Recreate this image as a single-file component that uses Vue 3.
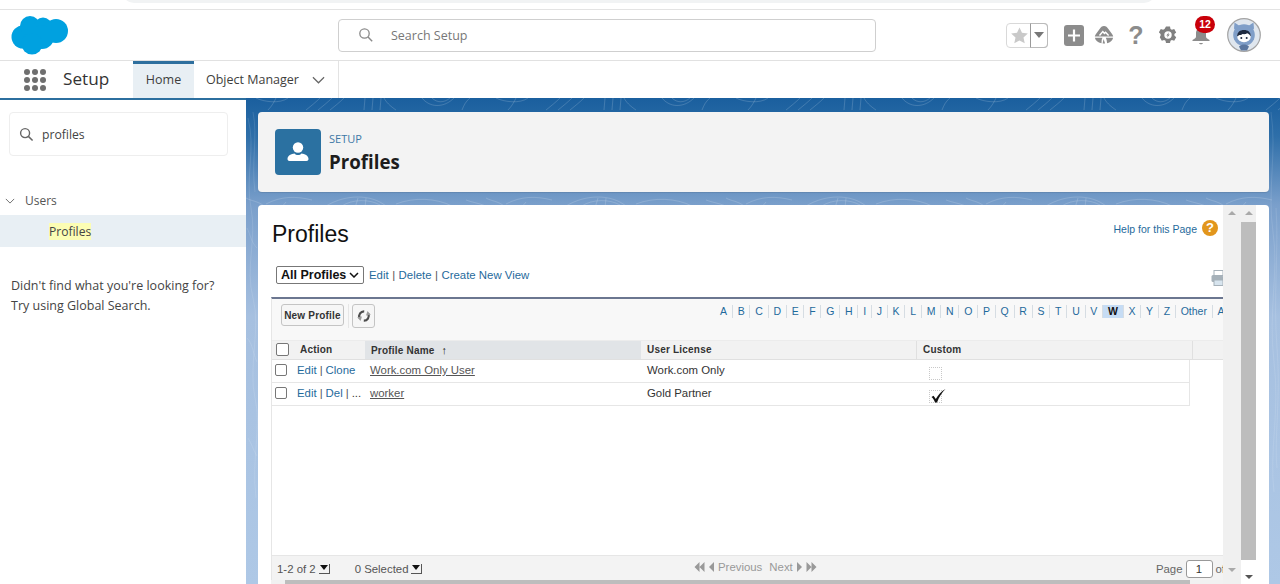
<script setup>
const letters = ['A','B','C','D','E','F','G','H','I','J','K','L','M','N','O','P','Q','R','S','T','U','V','W','X','Y','Z','Other','All']
const rows = [
  { id: 1, actions: ['Edit', 'Clone'], name: 'Work.com Only User', license: 'Work.com Only', custom: false },
  { id: 2, actions: ['Edit', 'Del'], more: true, name: 'worker', license: 'Gold Partner', custom: true }
]
const dots = Array.from({ length: 9 }, (_, i) => i)
</script>

<template>
  <div class="page">
    <div class="chrome"><div class="chrome-pill"></div></div>

    <header class="topbar">
      <div class="logo-wrap">
        <svg class="logo" viewBox="0 0 58 40" width="58" height="40">
          <g fill="#00a1e0">
            <circle cx="12" cy="22" r="11.500" />
            <circle cx="19" cy="11" r="10" />
            <circle cx="32" cy="11.500" r="9" />
            <circle cx="45" cy="16" r="12" />
            <circle cx="31" cy="22" r="12" />
            <circle cx="21" cy="29" r="10.500" />
          </g>
        </svg>
      </div>
      <div class="global-search">
        <svg class="search-ic" viewBox="0 0 16 16" width="16" height="16"><circle cx="6.500" cy="6.500" r="4.700" fill="none" stroke="#8a8a8a" stroke-width="1.300"/><path d="M10 10l4.200 4.200" stroke="#8a8a8a" stroke-width="1.400"/></svg>
        <span>Search Setup</span>
      </div>
      <div class="spacer"></div>
      <div class="tools">
        <div class="fav">
          <div class="fav-star">
            <svg viewBox="0 0 20 20" width="19" height="19"><path d="M10 1.500l2.600 5.700 6.200.7-4.600 4.200 1.300 6.100L10 15.200l-5.500 3 1.300-6.100L1.200 7.900l6.200-.7z" fill="#c9c9c9"/></svg>
          </div>
          <div class="fav-caret"><i></i></div>
        </div>
        <svg class="t-plus" viewBox="0 0 20 21" width="20" height="21"><rect width="20" height="21" rx="3" fill="#8c8c8c"/><path d="M10 4.500v12M4 10.500h12" stroke="#fff" stroke-width="2.200"/></svg>
        <svg class="t-trail" viewBox="0 0 20 20" width="20" height="20">
          <path d="M10 1c2 0 3.200 1.300 4.200 2.800l4 5.400c.6.800.9 1.500 1 2.300H.8c.1-.8.4-1.500 1-2.300l4-5.400C6.800 2.300 8 1 10 1z" fill="#8c8c8c"/>
          <path d="M5.500 10.500l3.300-4 1.600 2 1.200-1.200 3 3.200" fill="none" stroke="#fff" stroke-width="1.400"/>
          <path d="M.9 12.800h7.600l-.8 2-.2 3.500C3.800 17.700 1.500 15.700.9 12.800zM11.800 12.800h7.300c-.6 2.900-2.800 4.900-6 5.500l-.5-3.500zM9.600 14l1.500 4.500H8.600z" fill="#8c8c8c"/>
        </svg>
        <span class="t-help">?</span>
        <svg class="t-gear" viewBox="0 0 18 18" width="18" height="18"><path d="M7 .5h4l.5 2.400 1.400.8 2.300-.8 2 3.500-1.800 1.600v1.600l1.800 1.600-2 3.500-2.300-.8-1.400.8-.5 2.400H7l-.5-2.400-1.400-.8-2.300.8-2-3.500L1.600 9.600V8L-.2 6.400l2-3.500 2.300.8 1.400-.8z" fill="#808080"/><circle cx="9" cy="9" r="3.700" fill="#fff"/><path d="M10 6.200L7.300 9.500h1.500l-.8 2.300 2.700-3.300H9.200z" fill="#808080"/></svg>
        <div class="t-bell">
          <svg viewBox="0 0 20 20" width="20" height="20"><path d="M10 2c3.300 0 5 2.400 5 5.200v3.300c0 1.300 1 2 3.500 3.500v1H1.500v-1C4 12.500 5 11.800 5 10.500V7.200C5 4.400 6.700 2 10 2z" fill="#8c8c8c"/><path d="M8 17h4c-.3.900-1 1.300-2 1.300s-1.700-.4-2-1.300z" fill="#8c8c8c"/></svg>
          <span class="badge">12</span>
        </div>
        <svg class="t-avatar" viewBox="0 0 34 34" width="34" height="34">
          <defs><clipPath id="av"><circle cx="17" cy="17" r="16"/></clipPath></defs>
          <circle cx="17" cy="17" r="16.300" fill="#dfe6ee" stroke="#a3a3a3" stroke-width="1.200"/>
          <g clip-path="url(#av)">
            <path d="M7.500 4.500l4.500 3h10l4.500-3 .5 6-3 4H10l-3-4z" fill="#7f9ec8"/>
            <circle cx="17" cy="17" r="10.800" fill="#7f9ec8"/>
            <path d="M12 28.500c1.500-1.500 3.500-2 5-2s3.500.5 5 2l-2 4h-6z" fill="#5a769f"/>
            <ellipse cx="17" cy="18.500" rx="6.800" ry="5.800" fill="#fff"/>
            <path d="M10 18.500c.3-4.500 3-6.500 7-6.500s6.700 2 7 6.500c-1.200-1.500-2.200-2.800-3.800-3.300-1.200.9-3 1.300-4.700.9-.8.9-1.500 1-2.300 1-1 0-2 .7-3.200 1.400z" fill="#1e2a40"/>
            <circle cx="14.300" cy="20" r="1" fill="#1e2a40"/><circle cx="19.700" cy="20" r="1" fill="#1e2a40"/>
          </g>
        </svg>
      </div>
    </header>

    <nav class="navbar">
      <div class="waffle">
        <i v-for="d in dots" :key="d"></i>
      </div>
      <span class="app-name">Setup</span>
      <a class="tab tab-active">Home</a>
      <a class="tab tab-om">Object Manager
        <svg viewBox="0 0 14 8" width="13" height="8"><path d="M1 1l6 6 6-6" fill="none" stroke="#666" stroke-width="1.300"/></svg>
      </a>
    </nav>

    <div class="body">
      <aside class="sidebar">
        <div class="side-search">
          <svg viewBox="0 0 16 16" width="15" height="15"><circle cx="6.500" cy="6.500" r="4.800" fill="none" stroke="#666" stroke-width="1.500"/><path d="M10 10l4.500 4.500" stroke="#666" stroke-width="1.600"/></svg>
          <span>profiles</span>
        </div>
        <div class="tree-head">
          <svg viewBox="0 0 12 7" width="10" height="6"><path d="M1 1l5 5 5-5" fill="none" stroke="#666" stroke-width="1.100"/></svg>
          <span>Users</span>
        </div>
        <div class="tree-item"><mark>Profiles</mark></div>
        <p class="hint">Didn't find what you're looking for?<br>Try using Global Search.</p>
      </aside>

      <main class="main">
        <svg class="contours" width="1034" height="484">
          <defs>
            <pattern id="topo" width="240" height="110" patternUnits="userSpaceOnUse">
              <g fill="none" stroke="#fff" stroke-opacity=".16" stroke-width="1">
                <path d="M10 0c8 4 24 6 32 0M22 12c4-4 6-8 8-12M60 12c5-4 10-8 14-12M72 12c5-4 10-8 14-12M84 12c5-4 10-8 14-12"/>
                <path d="M118 12l1-12M126 12l1-12M134 12l1-12M150 12c-6-4-10-8-12-12M176 0c8 10 22 10 32 0M186 0c5 5 12 5 18 0M216 12c2-5 4-9 8-12"/>
                <path d="M20 106c15-8 30-8 46-4M80 108c20-12 45-12 60 0M96 108c10-7 28-7 38-1M150 106c18-7 40-6 56 2M0 100c5 3 12 3 18 8"/>
                <path d="M40 104l-5 6M112 100l-3 10M120 100l-1 10M220 102c5 2 12 3 20 6"/>
              </g>
            </pattern>
          </defs>
          <rect x="0" y="0" width="1034" height="110" fill="url(#topo)"/>
          <g fill="none" stroke="#fff" stroke-opacity=".11" stroke-width="1">
            <path d="M2 20c8 30-3 60 3 90s-6 60 2 90 -5 70 2 100 -4 60 1 100"/>
            <path d="M7 14c5 25-2 50 2 80"/>
            <path d="M1 130c4 8 4 14 10 20M1 240c6 6 6 16 10 24M2 340c4 6 5 12 9 18"/>
            <path d="M1025 14c6 40-4 80 2 120s-5 80 1 130 -5 90 0 130"/>
            <path d="M1030 110c3 40-3 90 1 140s-3 90 0 120"/>
          </g>
        </svg>

        <section class="page-head">
          <div class="head-icon">
            <svg viewBox="0 0 24 24" width="24" height="24"><circle cx="12" cy="7.500" r="5.200" fill="#fff"/><path d="M1.500 19c0-3.500 4-5.200 7-5.500 1 1 2 1.500 3.500 1.500s2.500-.5 3.500-1.500c3 .3 7 2 7 5.500 0 1.200-.8 2-2 2H3.500c-1.200 0-2-.8-2-2z" fill="#fff"/></svg>
          </div>
          <div class="head-text">
            <div class="eyebrow">SETUP</div>
            <div class="head-title">Profiles</div>
          </div>
        </section>

        <section class="card">
          <div class="frame">
            <div class="inner">
              <div class="title-row">
                <h1>Profiles</h1>
                <div class="help-link">
                  <a>Help for this Page</a>
                  <span class="help-dot">?</span>
                </div>
              </div>

              <div class="view-row">
                <div class="view-select">All Profiles
                  <svg viewBox="0 0 10 6" width="10" height="6"><path d="M1 1l4 4 4-4" fill="none" stroke="#111" stroke-width="1.500"/></svg>
                </div>
                <div class="view-links">
                  <a>Edit</a><b>|</b><a>Delete</a><b>|</b><a>Create New View</a>
                </div>
                <svg class="printer" viewBox="0 0 12 16" width="12" height="16">
                  <rect x="3" y="0.500" width="9" height="5" fill="#fff" stroke="#a6b1b9"/>
                  <rect x="0.500" y="5" width="11.500" height="7" rx="1.500" fill="#a6b1b9"/>
                  <rect x="3" y="10" width="9" height="5.500" fill="#d7e4ee" stroke="#a6b1b9"/>
                </svg>
              </div>

              <div class="list-view">
                <div class="list-tools">
                  <button class="btn-new">New Profile</button>
                  <span class="tool-sep"></span>
                  <button class="btn-refresh">
                    <svg viewBox="0 0 14 14" width="14" height="14">
                      <path d="M7.200 2.300A4.800 4.800 0 0 0 2.600 9" fill="none" stroke="#4d4d4d" stroke-width="2.200"/>
                      <path d="M.4 7.800h4.800L3 12z" fill="#9a9a9a" transform="rotate(-10 3 9)"/>
                      <path d="M6.800 11.700A4.800 4.800 0 0 0 11.400 5" fill="none" stroke="#4d4d4d" stroke-width="2.200"/>
                      <path d="M8.800 6.200h4.800L11 2z" fill="#9a9a9a" transform="rotate(-10 11 5)"/>
                    </svg>
                  </button>
                  <div class="spacer"></div>
                  <div class="letters">
                    <a v-for="l in letters" :key="l" :class="{ on: l === 'W' }">{{ l }}</a>
                  </div>
                </div>

                <div class="thead">
                  <div class="th th-check"><span class="chk chk-head"></span></div>
                  <div class="th th-action">Action</div>
                  <div class="th th-name">Profile Name <span class="arrow">↑</span></div>
                  <div class="th th-col">User License</div>
                  <div class="th th-col">Custom</div>
                  <div class="th th-fill"></div>
                </div>

                <div v-for="r in rows" :key="r.id" class="tr">
                  <div class="td td-check"><span class="chk"></span></div>
                  <div class="td td-action">
                    <a>{{ r.actions[0] }}</a><b>|</b><a>{{ r.actions[1] }}</a><template v-if="r.more"><b>|</b><em>...</em></template>
                  </div>
                  <div class="td td-name"><u>{{ r.name }}</u></div>
                  <div class="td td-col">{{ r.license }}</div>
                  <div class="td td-custom">
                    <span class="cb">
                      <svg v-if="r.custom" viewBox="0 0 16 16" width="16" height="16"><path d="M1.500 9l2-1.300 2.300 3.200C8 7.500 11 3.500 15.500 1c-3.500 3.500-6.500 8-8.500 13.500H5C4.500 12.500 3 10.200 1.500 9z" fill="#111"/></svg>
                    </span>
                  </div>
                </div>

                <div class="list-empty"></div>

                <div class="pager">
                  <span class="p-count">1-2 of 2</span><span class="mini-drop"></span>
                  <span class="p-sel">0 Selected</span><span class="mini-drop"></span>
                  <div class="p-center">
                    <svg viewBox="0 0 10 10" width="11" height="10"><path d="M5 0v10L0 5zM10 0v10L5 5z" fill="#999"/></svg>
                    <svg viewBox="0 0 5 10" width="5" height="10"><path d="M5 0v10L0 5z" fill="#999"/></svg>
                    <span class="p-prev">Previous</span>
                    <span class="p-next">Next</span>
                    <svg viewBox="0 0 5 10" width="5" height="10"><path d="M0 0v10l5-5z" fill="#999"/></svg>
                    <svg viewBox="0 0 10 10" width="11" height="10"><path d="M0 0v10l5-5zM5 0v10l5-5z" fill="#999"/></svg>
                  </div>
                  <div class="p-page">Page <span class="p-input">1</span> of</div>
                </div>
              </div>
              <div class="hscroll"><i></i></div>
            </div>
            <div class="vs vs-inner">
              <i class="up"></i><div class="spacer"></div><i class="down"></i>
            </div>
            <div class="vs vs-outer">
              <i class="up"></i><div class="vs-thumb"></div>
              <div class="vs-end"><i class="down dark"></i></div>
            </div>
          </div>
        </section>
      </main>
    </div>
  </div>
</template>

<style>
html, body { margin: 0; padding: 0; background: #fff; overflow: hidden; }
</style>

<style scoped>
.page { width: 1280px; height: 584px; overflow: hidden; display: flex; flex-direction: column; font-family: "Open Sans", "Noto Sans", sans-serif; color: #3e3e3c; background: #fff; }
.spacer { flex: 1; }
a { color: #1f6a9c; cursor: pointer; }

.chrome { height: 9px; border-bottom: 1px solid #e3e3e3; flex: none; overflow: hidden; }
.chrome-pill { margin: -14px 0 0 122px; width: 1034px; height: 17px; background: #f1f3f4; border-radius: 0 0 12px 12px; }

.topbar { height: 51px; flex: none; display: flex; align-items: center; border-bottom: 1px solid #e1e1e1; box-sizing: border-box; }
.logo-wrap { width: 338px; flex: none; padding-left: 11px; box-sizing: border-box; display: flex; }
.global-search { width: 538px; height: 33px; box-sizing: border-box; border: 1px solid #cfcfcf; border-radius: 4px; display: flex; align-items: center; font-size: 12.500px; color: #777; }
.search-ic { margin-left: 19px; margin-right: 17px; }
.tools { display: flex; align-items: center; padding-right: 19px; }
.fav { width: 42px; height: 25px; display: flex; box-sizing: border-box; border: 1px solid #d9d9d9; border-radius: 4px; }
.fav-star { width: 24px; display: flex; align-items: center; justify-content: center; }
.fav-caret { flex: 1; border-left: 1px solid #9a9a9a; margin: -1px; border-top: 1px solid #bbb; border-right: 1px solid #bbb; border-bottom: 1px solid #bbb; border-radius: 0 4px 4px 0; display: flex; align-items: center; justify-content: center; }
.fav-caret i { border: 5px solid transparent; border-top: 6px solid #777; border-bottom: 0; }
.t-plus { margin-left: 16px; }
.t-trail { margin-left: 10px; }
.t-help { width: 16px; margin-left: 14px; text-align: center; font-family: "Liberation Sans", sans-serif; font-weight: 700; font-size: 25px; line-height: 26px; color: #8c8c8c; }
.t-gear { margin-left: 15px; }
.t-bell { position: relative; width: 20px; height: 20px; margin-left: 14px; margin-top: 2px; }
.t-bell svg { display: block; }
.badge { position: absolute; left: 4px; top: -10px; width: 20px; height: 17px; border-radius: 9px; background: #c9000a; color: #fff; font-size: 10.500px; font-weight: 700; line-height: 16px; text-align: center; font-family: "Liberation Sans", sans-serif; }
.t-avatar { margin-left: 16px; margin-top: -1px; }

.navbar { height: 37px; flex: none; display: flex; align-items: center; }
.waffle { width: 22px; height: 22px; margin-left: 24px; display: grid; grid-template-columns: repeat(3, 6px); grid-auto-rows: 6px; gap: 2px; }
.waffle i { background: #6f6f6f; border-radius: 50%; }
.app-name { font-size: 17.200px; margin-left: 17px; width: 70px; color: #333; padding-bottom: 2px; }
.tab { height: 37px; box-sizing: border-box; display: flex; align-items: center; font-size: 12.500px; color: #3e3e3c; }
.tab-active { width: 61px; justify-content: center; background: #e8eff4; border-top: 3px solid #2e6f9e; padding-bottom: 3px; }
.tab-om { width: 145px; padding-left: 12px; gap: 13px; border-right: 1px solid #e3e3e3; }

.body { flex: 1; display: flex; min-height: 0; }
.sidebar { width: 246px; flex: none; background: #fff; border-top: 2px solid #2c6f9f; box-sizing: border-box; }
.side-search { margin: 12px 0 0 9px; width: 219px; height: 44px; box-sizing: border-box; border: 1px solid #eee; border-radius: 4px; display: flex; align-items: center; gap: 8px; padding: 1px 0 0 9px; font-size: 12.200px; color: #444; }
.tree-head { display: flex; align-items: center; gap: 10px; margin-top: 35px; padding-left: 5px; height: 19px; font-size: 12px; color: #555; }
.tree-item { height: 32px; margin-top: 5px; background: #e8eff4; display: flex; align-items: center; padding-left: 49px; font-size: 12.100px; }
mark { background: #fcfdb4; color: #444; }
.hint { margin: 29px 0 0 11px; font-size: 12.500px; line-height: 20px; color: #444; }

.main { flex: 1; position: relative; padding: 14px 11px 0 12px; overflow: hidden; background: linear-gradient(180deg, #1a5f9e 0%, #2f6fa9 8%, #7a9fcb 22%, #a6c0e0 45%, #aec8e6 100%); display: flex; flex-direction: column; gap: 13px; }
.contours { position: absolute; left: 0; top: 0; }
.page-head { position: relative; height: 80px; flex: none; box-sizing: border-box; background: #f3f3f3; border-radius: 4px; display: flex; align-items: center; padding-left: 17px; gap: 9px; box-shadow: 0 1px 1px rgba(0,0,0,.1); }
.head-icon { width: 46px; height: 46px; background: #2b71a1; border-radius: 4px; display: flex; align-items: center; justify-content: center; }
.head-text { padding-top: 2px; margin-left: -1px; }
.eyebrow { font-size: 11px; line-height: 15px; color: #3e78a6; margin-bottom: 2px; }
.head-title { font-size: 18.700px; line-height: 28px; font-weight: 700; color: #1d1d1d; }

.card { position: relative; flex: 1; min-height: 0; background: #fff; border-radius: 4px 4px 0 0; padding-left: 13px; padding-right: 13px; }
.frame { height: 100%; display: flex; }
.inner { width: 952px; flex: none; overflow: hidden; font-family: "Liberation Sans", Arial, sans-serif; display: flex; flex-direction: column; }
.title-row { height: 59px; display: flex; align-items: flex-start; justify-content: space-between; flex: none; }
h1 { margin: 15px 0 0 1px; font-size: 23px; line-height: 28px; font-weight: 400; color: #111; }
.help-link { display: flex; align-items: center; gap: 5px; margin-top: 17px; margin-right: 5px; font-size: 10.500px; }
.help-dot { width: 16px; height: 16px; border-radius: 50%; background: #e2961c; color: #fff; font-size: 13px; font-weight: 700; line-height: 16px; text-align: center; margin-top: -2px; }
.view-row { height: 33px; flex: none; display: flex; align-items: flex-start; padding-left: 5px; font-size: 11.400px; box-sizing: border-box; padding-top: 2px; }
.view-select { width: 88px; height: 18px; box-sizing: border-box; border: 1px solid #777; border-radius: 2px; display: flex; align-items: center; justify-content: space-between; padding: 0 4px; font-size: 12.500px; font-weight: 700; color: #111; }
.view-links { margin-left: 5px; line-height: 18px; }
.view-links b { font-weight: 400; color: #555; margin: 0 3.500px; }
.td-action b { font-weight: 400; color: #555; margin: 0 3px; }
.printer { margin-left: auto; margin-top: 4px; flex: none; }
.list-view { flex: 1; min-height: 0; display: flex; flex-direction: column; border-top: 2px solid #6b7690; border-left: 1px solid #e6e6e6; background: #fff; font-size: 11.400px; }
.list-tools { height: 41px; flex: none; background: #f8f8f8; display: flex; align-items: flex-start; padding: 5px 0 0 9px; box-sizing: border-box; }
.btn-new { width: 63px; height: 22px; padding: 0; box-sizing: border-box; border: 1px solid #c4c4c4; border-radius: 3px; background: #f6f6f6; font: 700 10px "Liberation Sans", sans-serif; letter-spacing: .2px; color: #333; }
.tool-sep { width: 1px; height: 24px; background: #e6e6e6; margin: 0 3px 0 4px; }
.btn-refresh { width: 23px; height: 24px; padding: 0; box-sizing: border-box; border: 1px solid #c4c4c4; border-radius: 3px; background: #f6f6f6; display: flex; align-items: center; justify-content: center; }
.letters { display: flex; margin-right: -12px; margin-top: 1px; white-space: nowrap; height: 13px; }
.letters a { padding: 0 4.800px; border-right: 1px solid #d6dde3; font-size: 10.500px; line-height: 13px; }
.letters a.on { background: #c6dcf4; font-weight: 700; color: #111; }
.thead { height: 20px; flex: none; display: flex; background: #f2f2f2; border-top: 1px solid #ececec; border-bottom: 1px solid #e0e0e0; box-sizing: border-box; }
.th { font-size: 10px; font-weight: 700; line-height: 18px; color: #333; letter-spacing: .2px; box-sizing: border-box; }
.th-check { width: 21px; display: flex; align-items: center; padding-left: 4px; padding-bottom: 1px; }
.th-action { width: 72px; padding-left: 7px; }
.th-name { width: 276px; padding-left: 6px; background: #e1e4e7; }
.th-col { width: 276px; padding-left: 6px; border-right: 1px solid #e0e0e0; }
.th-fill { flex: 1; }
.arrow { margin-left: 4px; font-size: 11px; color: #222; }
.chk { display: block; width: 10px; height: 10px; border: 1px solid #777; border-radius: 2px; background: #fff; }
.chk-head { width: 11px; height: 11px; }
.tr { width: 918px; height: 23px; flex: none; box-sizing: border-box; display: flex; align-items: center; border-bottom: 1px solid #e6e6e6; border-right: 1px solid #e6e6e6; color: #333; padding-bottom: 2px; }
.td { font-size: 11.400px; }
.td-check { width: 25px; padding-left: 3px; box-sizing: border-box; }
.td-action { width: 73px; white-space: nowrap; overflow: hidden; }
.td-action em { font-style: normal; color: #333; }
.td-name { width: 277px; }
.td-name u { color: #555; }
.td-col { width: 282px; }
.td-custom { flex: 1; margin-top: 6px; }
.cb { display: block; width: 11px; height: 11px; border: 1px dotted #c8c8c8; position: relative; }
.cb svg { position: absolute; left: 0; top: -3px; }
.list-empty { flex: 1; }
.pager { height: 25px; flex: none; background: #f3f3f3; border-top: 1px solid #e6e6e6; display: flex; align-items: center; padding: 1px 0 0 5px; font-size: 11.400px; color: #555; white-space: nowrap; box-sizing: border-box; }
.mini-drop { width: 10px; height: 9px; margin-left: 3px; border-right: 1px solid #555; border-bottom: 1px solid #555; position: relative; }
.mini-drop::after { content: ""; position: absolute; left: 1px; top: 1px; border: 4px solid transparent; border-top: 5px solid #111; border-bottom: 0; }
.p-sel { margin-left: 25px; }
.p-center { position: absolute; left: 436px; display: flex; align-items: center; gap: 4px; color: #999; margin-top: -4px; }
.p-next { margin-left: 3px; }
.p-page { margin-left: auto; margin-right: -2px; display: flex; align-items: center; gap: 2px; color: #666; }
.p-input { width: 27px; height: 18px; box-sizing: border-box; border: 1px solid #999; border-radius: 3px; background: #fff; color: #333; text-align: center; line-height: 16px; margin: 0 1px 0 1px; }
.hscroll { height: 4px; flex: none; background: #f1f1f1; padding-left: 14px; }
.hscroll i { display: block; height: 4px; width: 905px; background: #bdbdbd; }
.vs { display: flex; flex-direction: column; align-items: center; background: #f0f0f0; }
.vs-inner { width: 18px; padding: 6px 0 12px; box-sizing: border-box; }
.vs-outer { width: 15px; padding: 6px 0 0; box-sizing: border-box; }
.vs-thumb { width: 15px; flex: 1; margin-top: 7px; background: #bdbdbd; }
.vs-end { width: 15px; height: 24px; background: #fff; display: flex; justify-content: center; align-items: flex-end; padding-bottom: 5px; box-sizing: border-box; }
.up { border: 4px solid transparent; border-bottom: 4px solid #a9a9a9; border-top: 0; }
.down { border: 4px solid transparent; border-top: 4px solid #a9a9a9; border-bottom: 0; }
.down.dark { border-top-color: #555; }
</style>
